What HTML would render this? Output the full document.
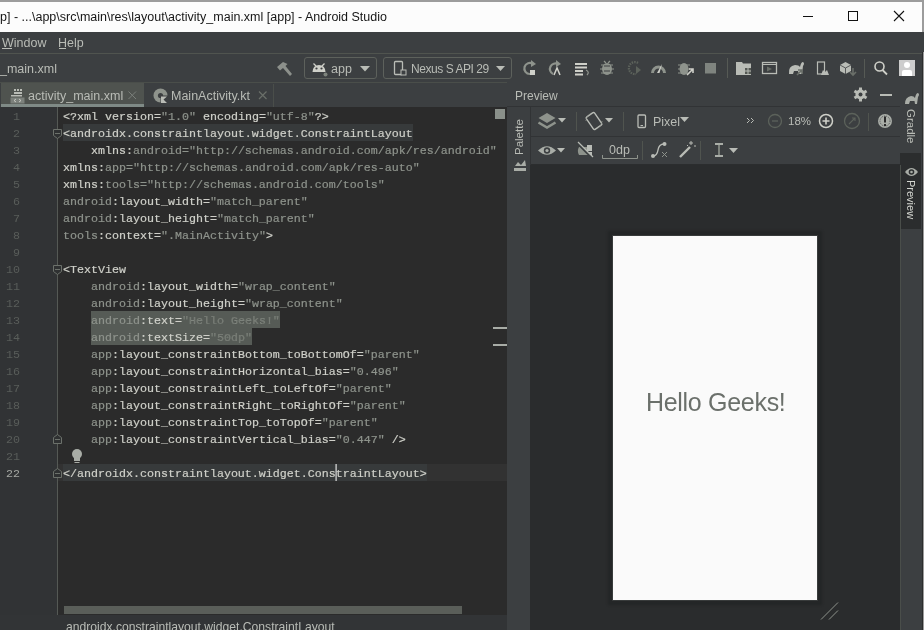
<!DOCTYPE html>
<html><head><meta charset="utf-8">
<style>
*{margin:0;padding:0;box-sizing:border-box}
html,body{width:924px;height:630px;overflow:hidden;background:#3c3f41;font-family:"Liberation Sans",sans-serif}
body{filter:grayscale(0.001)}
.a{position:absolute}
svg{position:absolute;overflow:visible}
#title{left:0;top:0;width:924px;height:32px;background:#fcfcfc;border-top:2px solid #9c9c9c;border-right:2px solid #9c9c9c}
#title .t{left:0;top:8px;font-size:12.5px;color:#161616;white-space:nowrap}
#menu{left:0;top:32px;width:924px;height:21px;background:#3c3f41}
#menu span{position:absolute;top:4px;font-size:12.5px;color:#b9bcb6}
#tb{left:0;top:53px;width:924px;height:29px;background:#3c3f41;border-top:1px solid #50544f}
.tt{position:absolute;font-size:12.5px;color:#b9bcb6;white-space:nowrap}
.box{position:absolute;border:1px solid #5d615c;border-radius:3px}
#tabs{left:0;top:82px;width:507px;height:25px;background:#3c3f41;border-top:1px solid #4a4e4a}
#editor{left:0;top:107px;width:507px;height:508px;background:#2b2b2b}
#gutter{left:0;top:107px;width:58px;height:508px;background:#313335;border-right:1px solid #555955}
.code{position:absolute;left:63px;top:109px;font-family:"Liberation Mono",monospace;font-size:11.67px;line-height:17px;white-space:pre}
.code .w{color:#cfd0c9;-webkit-text-stroke:0.2px #cfd0c9}
.code .d{color:#8e938c;-webkit-text-stroke:0.2px #8e938c}
.ln{position:absolute;left:0;top:109px;width:20px;text-align:right;font-family:"Liberation Mono",monospace;font-size:11.67px;line-height:17px;color:#595d5a;white-space:pre}
.hl{position:absolute;background:#373a3b}
#crumb{left:0;top:615px;width:507px;height:15px;background:#323436}
#prev{left:507px;top:82px;width:393px;height:548px;background:#3c3f41}
#surface{left:530px;top:165px;width:370px;height:465px;background:#2a2c2d}
#phone{left:613px;top:236px;width:204px;height:364px;background:#fafafa;box-shadow:0 0 0 1px #383b3b,0 0 2px 5px #242627}
#stripx{left:900px;top:82px;width:24px;height:548px;background:#3c3f41;border-left:1px solid #333537}
</style></head><body>
<div id="title" class="a"><div class="t a">p] - ...\app\src\main\res\layout\activity_main.xml [app] - Android Studio</div>
<svg width="924" height="32" style="left:0;top:-2px">
<line x1="803" y1="16.5" x2="813" y2="16.5" stroke="#111" stroke-width="1"/>
<rect x="848.5" y="11.5" width="9" height="9" fill="none" stroke="#111" stroke-width="1"/>
<path d="M894 11 L904 21 M904 11 L894 21" stroke="#111" stroke-width="1.1"/>
</svg></div>
<div id="menu" class="a"><span style="left:2px">Window</span><span style="left:58px">Help</span><div class="a" style="left:2px;top:16px;width:10px;height:1px;background:#b9bcb6"></div><div class="a" style="left:59px;top:16px;width:7px;height:1px;background:#b9bcb6"></div></div>
<div id="tb" class="a">
<div class="tt" style="left:0;top:8px">_main.xml</div>
<svg width="924" height="29" style="left:0;top:0">
<g fill="#8c908b">
<path d="M277 13 L283 8 L287.5 10 L285.5 12 L292 20 L290 22 L283 14 L280 16.5 Z"/>
</g>
<g fill="#cfd0c9">
<path d="M312.5 18 Q313 11 319 11 Q325 11 325.5 18 Z"/>
<path d="M313.5 9.5 L316 12 M324.5 9.5 L322 12" stroke="#cfd0c9" stroke-width="1.3"/>
</g>
<circle cx="316.5" cy="14.5" r="1.1" fill="#3c3f41"/><circle cx="321.5" cy="14.5" r="1.1" fill="#3c3f41"/>
<circle cx="325.5" cy="20.5" r="2" fill="#7d837c"/>
<path d="M360 12 L370 12 L365 17.5 Z" fill="#b9bcb6"/>
<rect x="394.5" y="7.5" width="8" height="13" rx="1" fill="none" stroke="#b9bcb6" stroke-width="1.3"/>
<rect x="401" y="16" width="5" height="5" fill="#3c3f41" stroke="#b9bcb6" stroke-width="1"/>
<path d="M496 12 L505 12 L500.5 17 Z" fill="#b9bcb6"/>
<!-- rerun -->
<path d="M533 10 A5.5 5.5 0 1 0 530 20" fill="none" stroke="#8e938c" stroke-width="2.2"/>
<path d="M531 6 L536 10 L531 13 Z" fill="#8e938c"/>
<rect x="530" y="16" width="5" height="5" fill="#cfd0c9"/>
<!-- apply code changes -->
<path d="M558 10 A5.5 5.5 0 1 0 553 20" fill="none" stroke="#8e938c" stroke-width="2.2"/>
<path d="M556 6 L561 10 L556 13 Z" fill="#8e938c"/>
<path d="M554 21 L557 14 L560 21" fill="none" stroke="#cfd0c9" stroke-width="1.5"/>
<!-- apply changes lines -->
<g fill="#cfd0c9"><rect x="575" y="9" width="12" height="2"/><rect x="575" y="12.5" width="12" height="2"/><rect x="575" y="16" width="8" height="2"/><rect x="575" y="19.5" width="8" height="2"/></g>
<path d="M586 16 Q590 18 587 21" fill="none" stroke="#8e938c" stroke-width="1.2"/>
<!-- bug -->
<g fill="#8e938c"><ellipse cx="607" cy="15" rx="5" ry="6"/></g>
<path d="M601 11 L613 11 M600 15 L614 15 M601 19 L613 19 M604 7 L606 9 M610 7 L608 9" stroke="#8e938c" stroke-width="1.2"/>
<path d="M604 12 L610 12 M604 17 L610 17" stroke="#3c3f41" stroke-width="1"/>
<!-- attach (dim) -->
<path d="M638 9 A6 6 0 1 0 636 20" fill="none" stroke="#5c625b" stroke-width="2.2" stroke-dasharray="1.5 1"/>
<path d="M636 12 L641 16 L636 20 Z" fill="#5c625b"/>
<!-- gauge -->
<path d="M651 19 A7.5 7.5 0 0 1 666 19 L663 19 A4.5 4.5 0 0 0 654 19 Z" fill="#8e938c"/>
<path d="M657 19 L662 10 L659.5 19 Z" fill="#cfd0c9"/>
<!-- attach debugger -->
<g fill="#8e938c"><ellipse cx="684" cy="15" rx="4.5" ry="6"/></g>
<path d="M678 11 L690 11 M678 15 L690 15 M678 19 L688 19" stroke="#8e938c" stroke-width="1.2"/>
<path d="M687 21 L693 15 M689 15 L693 15 L693 19" stroke="#cfd0c9" stroke-width="1.6" fill="none"/>
<!-- stop -->
<rect x="705" y="9" width="11" height="10.5" fill="#7f847f"/>
<line x1="727.5" y1="4" x2="727.5" y2="24" stroke="#565a55"/>
<!-- project structure -->
<path d="M736 8 L742 8 L743 9.5 L751 9.5 L751 21 L736 21 Z" fill="#b9bcb6"/>
<g fill="#545853"><rect x="745" y="14" width="2.5" height="2.5"/><rect x="748.5" y="14" width="2.5" height="2.5"/><rect x="745" y="17.5" width="2.5" height="2.5"/><rect x="748.5" y="17.5" width="2.5" height="2.5"/></g>
<!-- avd -->
<rect x="762.5" y="8.5" width="14" height="11" fill="none" stroke="#b9bcb6" stroke-width="1.3"/>
<line x1="762.5" y1="10.5" x2="776.5" y2="10.5" stroke="#b9bcb6"/>
<path d="M767 12.5 L772 15 L767 17.5 Z" fill="#6a6f69"/>
<!-- gradle elephant -->
<path d="M789 20 Q788 12 795 11 Q799 11 800 13 Q801 8 803 8 Q805 9 803 12 L802 20 L799 20 L798 17 L794 17 L793 20 Z" fill="#b9bcb6"/>
<path d="M797 21 L802 16 M798 16 L802 16 L802 20" stroke="#6a6f69" stroke-width="1.6" fill="none"/>
<!-- device manager -->
<rect x="817.5" y="8" width="7" height="12" fill="none" stroke="#b9bcb6" stroke-width="1.2"/>
<path d="M821 21 L829 21 L827 16 L825 18 L823 16 Z" fill="#b9bcb6"/>
<!-- sdk cube -->
<path d="M840 11 L845.5 8 L851 11 L851 17 L845.5 20 L840 17 Z" fill="#b9bcb6"/>
<path d="M840 11 L845.5 14 L851 11 M845.5 14 L845.5 20" stroke="#3c3f41" stroke-width="0.8" fill="none"/>
<path d="M853 14 L853 20 M850 18 L853 21 L856 18" stroke="#6a6f69" stroke-width="1.6" fill="none"/>
<line x1="864.5" y1="5" x2="864.5" y2="24" stroke="#565a55"/>
<!-- search -->
<circle cx="879.5" cy="12.5" r="4.5" fill="none" stroke="#cfd0c9" stroke-width="1.6"/>
<line x1="882.5" y1="16" x2="887" y2="20.5" stroke="#cfd0c9" stroke-width="1.8"/>
<!-- avatar -->
<rect x="899" y="6" width="16" height="16" fill="#cdcdcd"/>
<circle cx="907" cy="11" r="3" fill="#fff"/>
<path d="M902 22 L902 18 Q902 16 904 16 L910 16 Q912 16 912 18 L912 22 Z" fill="#fff"/>
</svg>
<div class="box" style="left:304px;top:3px;width:73px;height:22px"></div>
<div class="tt" style="left:331px;top:8px">app</div>
<div class="box" style="left:383px;top:3px;width:129px;height:22px"></div>
<div class="tt" style="left:411px;top:8px;font-size:12px;letter-spacing:-0.45px">Nexus S API 29</div>
</div>
<div id="tabs" class="a">
<div class="a" style="left:1px;top:0;width:143px;height:24px;background:#4f534f;border-bottom:3px solid #7f8a86"></div>
<div class="tt" style="left:28px;top:6px">activity_main.xml</div>
<div class="tt" style="left:171px;top:6px">MainActivity.kt</div>
<svg width="507" height="25" style="left:0;top:0">
<g fill="#b9bcb6"><rect x="14" y="6" width="2" height="2"/><rect x="17" y="6" width="2" height="2"/><rect x="20" y="6" width="2" height="2"/><rect x="14" y="9" width="8" height="2"/><rect x="11" y="12" width="11" height="1.5"/></g>
<rect x="10.5" y="14.5" width="14" height="6" fill="#7c817c"/>
<path d="M14 17.5 L16 16 M14 17.5 L16 19 M21 17.5 L19 16 M21 17.5 L19 19" stroke="#cfd0c9" stroke-width="0.9"/>
<path d="M128.5 8.5 L136 16 M136 8.5 L128.5 16" stroke="#7a7f7a" stroke-width="1"/>
<circle cx="160.5" cy="12.5" r="7" fill="#8e938c"/>
<circle cx="160.5" cy="12.5" r="2.6" fill="#3c3f41"/>
<path d="M160.5 12.5 L168 12.5 L168 20 L160.5 20 Z" fill="#3c3f41"/>
<path d="M161 13.5 L167 13.5 L163.5 16.5 L167 20 L161 20 Z" fill="#b9bcb6"/>
<path d="M259 8.5 L266.5 16 M266.5 8.5 L259 16" stroke="#6a6f69" stroke-width="1.2"/>
<line x1="273.5" y1="1" x2="273.5" y2="24" stroke="#4a4e4a"/>
</svg>
</div>
<div id="editor" class="a"></div>
<div id="gutter" class="a"></div>
<div class="hl" style="left:63px;top:124px;width:350px;height:17px"></div>
<div class="hl" style="left:58px;top:464px;width:449px;height:17px;background:#323232"></div>
<div class="hl" style="left:63px;top:464px;width:364px;height:17px"></div>
<div class="hl" style="left:91px;top:311px;width:189px;height:17px;background:#565b56"></div>
<div class="hl" style="left:91px;top:328px;width:161px;height:17px;background:#565b56"></div>
<div class="ln">1
2
3
4
5
6
7
8
9
10
11
12
13
14
15
16
17
18
19
20
21
<span style="color:#a4a7a2">22</span></div>
<div class="code"><span class="w">&lt;?xml version=</span><span class="d">&quot;1.0&quot;</span><span class="w"> encoding=</span><span class="d">&quot;utf-8&quot;</span><span class="w">?&gt;</span>
<span class="w">&lt;androidx.constraintlayout.widget.ConstraintLayout</span>
<span class="w">    xmlns:</span><span class="d">android=&quot;http://schemas.android.com/apk/res/android&quot;</span>
<span class="w">xmlns:</span><span class="d">app=&quot;http://schemas.android.com/apk/res-auto&quot;</span>
<span class="w">xmlns:</span><span class="d">tools=&quot;http://schemas.android.com/tools&quot;</span>
<span class="d">android</span><span class="w">:layout_width=</span><span class="d">&quot;match_parent&quot;</span>
<span class="d">android</span><span class="w">:layout_height=</span><span class="d">&quot;match_parent&quot;</span>
<span class="d">tools</span><span class="w">:context=</span><span class="d">&quot;.MainActivity&quot;</span><span class="w">&gt;</span>

<span class="w">&lt;TextView</span>
<span class="w">    </span><span class="d">android</span><span class="w">:layout_width=</span><span class="d">&quot;wrap_content&quot;</span>
<span class="w">    </span><span class="d">android</span><span class="w">:layout_height=</span><span class="d">&quot;wrap_content&quot;</span>
<span class="w">    </span><span class="d">android</span><span class="w">:text=</span><span class="d" style="color:#727770">&quot;Hello Geeks!&quot;</span>
<span class="w">    </span><span class="d">android</span><span class="w">:textSize=</span><span class="d" style="color:#727770">&quot;50dp&quot;</span>
<span class="w">    </span><span class="d">app</span><span class="w">:layout_constraintBottom_toBottomOf=</span><span class="d">&quot;parent&quot;</span>
<span class="w">    </span><span class="d">app</span><span class="w">:layout_constraintHorizontal_bias=</span><span class="d">&quot;0.496&quot;</span>
<span class="w">    </span><span class="d">app</span><span class="w">:layout_constraintLeft_toLeftOf=</span><span class="d">&quot;parent&quot;</span>
<span class="w">    </span><span class="d">app</span><span class="w">:layout_constraintRight_toRightOf=</span><span class="d">&quot;parent&quot;</span>
<span class="w">    </span><span class="d">app</span><span class="w">:layout_constraintTop_toTopOf=</span><span class="d">&quot;parent&quot;</span>
<span class="w">    </span><span class="d">app</span><span class="w">:layout_constraintVertical_bias=</span><span class="d">&quot;0.447&quot;</span><span class="w"> /&gt;</span>

<span class="w">&lt;/androidx.constraintlayout.widget.ConstraintLayout&gt;</span></div>

<svg width="507" height="520" style="left:0;top:107px">
<g fill="#2f3132" stroke="#6c716b" stroke-width="1">
<path d="M53.5 22.5 L61.5 22.5 L61.5 28.5 L57.5 31.5 L53.5 28.5 Z"/>
<path d="M53.5 158.5 L61.5 158.5 L61.5 164.5 L57.5 167.5 L53.5 164.5 Z"/>
<path d="M53.5 336.5 L61.5 336.5 L61.5 330.5 L57.5 327.5 L53.5 330.5 Z"/>
<path d="M53.5 370.5 L61.5 370.5 L61.5 364.5 L57.5 361.5 L53.5 364.5 Z"/>
</g>
<g stroke="#6c716b" stroke-width="1">
<line x1="55" y1="26.5" x2="60" y2="26.5"/><line x1="55" y1="162.5" x2="60" y2="162.5"/>
<line x1="55" y1="332.5" x2="60" y2="332.5"/><line x1="55" y1="366.5" x2="60" y2="366.5"/>
</g>
<circle cx="77" cy="347" r="5" fill="#a9ada7"/>
<rect x="74" y="351" width="6" height="2" fill="#a9ada7"/>
<g stroke="#a9ada7" stroke-width="1"><line x1="74" y1="353.5" x2="80" y2="353.5"/><line x1="74.5" y1="355.5" x2="79.5" y2="355.5"/></g>
<rect x="495" y="2" width="10" height="10" fill="#8a908a"/>
<rect x="493" y="220" width="14" height="2" fill="#a8aca6"/>
<rect x="493" y="237" width="14" height="2" fill="#a8aca6"/>
<rect x="335.5" y="357" width="1.2" height="17" fill="#e0e0e0"/>
</svg>
<div class="a" style="left:64px;top:606px;width:398px;height:8px;background:#5a5e59"></div>
<div id="crumb" class="a"><div class="tt" style="left:66px;top:5px;font-size:12.15px">androidx.constraintlayout.widget.ConstraintLayout</div></div>
<div id="prev" class="a">
<div class="tt" style="left:8px;top:7px;font-size:12px">Preview</div>
</div>
<svg width="417" height="548" style="left:507px;top:82px">
<line x1="0" y1="24.5" x2="393" y2="24.5" stroke="#313335"/>
<line x1="23.5" y1="25" x2="23.5" y2="83" stroke="#313335"/>
<line x1="24" y1="54.5" x2="393" y2="54.5" stroke="#313335"/>
<line x1="24" y1="82.5" x2="393" y2="82.5" stroke="#2b2d2e"/>
<!-- gear -->
<g transform="translate(353.5,12.5)" fill="#b9bcb6">
<circle r="5"/>
<g><rect x="-1.5" y="-7" width="3" height="14"/><rect x="-1.5" y="-7" width="3" height="14" transform="rotate(60)"/><rect x="-1.5" y="-7" width="3" height="14" transform="rotate(120)"/></g>
<circle r="2" fill="#3c3f41"/>
</g>
<rect x="373" y="12" width="12" height="2" fill="#b9bcb6"/>
<!-- row1 -->
<path d="M31.5 36 L40 31 L48.5 36 L40 41 Z" fill="#8e938c"/>
<path d="M31.5 40.5 L40 45.5 L48.5 40.5" fill="none" stroke="#8e938c" stroke-width="2.6"/>
<path d="M51 36 L59 36 L55 40.5 Z" fill="#b9bcb6"/>
<line x1="69.5" y1="30" x2="69.5" y2="49" stroke="#50544f"/>
<g transform="translate(87,39) rotate(-35)"><rect x="-5" y="-7.5" width="10" height="15" rx="1.5" fill="none" stroke="#b9bcb6" stroke-width="1.4"/></g>
<path d="M79 39 A8.5 8.5 0 0 1 84 31.5 M95 39 A8.5 8.5 0 0 1 90 46.5" fill="none" stroke="#8e938c" stroke-width="0.9" stroke-dasharray="1.2 1"/>
<path d="M98 36 L106 36 L102 40.5 Z" fill="#b9bcb6"/>
<line x1="116.5" y1="30" x2="116.5" y2="49" stroke="#50544f"/>
<rect x="131" y="33" width="7.5" height="12.5" rx="1" fill="none" stroke="#b9bcb6" stroke-width="1.3"/>
<line x1="133.5" y1="43.5" x2="136" y2="43.5" stroke="#b9bcb6"/>
<path d="M173 35 L182 35 L177.5 40 Z" fill="#b9bcb6"/>
<path d="M240 36 L242.5 38.5 L240 41 M244 36 L246.5 38.5 L244 41" fill="none" stroke="#b9bcb6" stroke-width="1"/>
<circle cx="268" cy="39" r="6.5" fill="none" stroke="#5c625b" stroke-width="1.3"/>
<line x1="265" y1="39" x2="271" y2="39" stroke="#5c625b" stroke-width="1.3"/>
<circle cx="319" cy="39" r="6.5" fill="none" stroke="#cfd0c9" stroke-width="1.5"/>
<path d="M315.5 39 L322.5 39 M319 35.5 L319 42.5" stroke="#cfd0c9" stroke-width="1.6"/>
<circle cx="345" cy="39" r="7.5" fill="none" stroke="#5c625b" stroke-width="1.3"/>
<path d="M342 42 L348 36 M345 36 L348 36 L348 39" fill="none" stroke="#5c625b" stroke-width="1.1"/>
<line x1="361.5" y1="31" x2="361.5" y2="49" stroke="#50544f"/>
<circle cx="378" cy="39" r="7" fill="#a9ada7"/>
<circle cx="378" cy="39" r="5" fill="none" stroke="#3c3f41" stroke-width="0.8" stroke-dasharray="1 1"/>
<rect x="377" y="34.5" width="2" height="6" fill="#2b2b2b"/><rect x="377" y="42" width="2" height="2" fill="#2b2b2b"/>
<!-- row2 -->
<path d="M31 68.5 Q40 60 49 68.5 Q40 77 31 68.5 Z" fill="#a9ada7"/>
<circle cx="40" cy="68.5" r="3.2" fill="#3c3f41"/><circle cx="40" cy="68.5" r="1.6" fill="#a9ada7"/>
<path d="M50 66 L58 66 L54 70.5 Z" fill="#b9bcb6"/>
<path d="M72 73 A8 8 0 0 1 72 65 L81 65 L81 73 Z" fill="#8e938c"/>
<rect x="80" y="63" width="5" height="6" fill="#b9bcb6"/><rect x="80" y="70" width="5" height="3" fill="#b9bcb6"/>
<line x1="70" y1="61" x2="86" y2="77" stroke="#3c3f41" stroke-width="2"/>
<line x1="71" y1="60" x2="86" y2="75" stroke="#b9bcb6" stroke-width="1.2"/>
<path d="M95.5 73 L95.5 76.5 L130.5 76.5 L130.5 73" fill="none" stroke="#8e938c" stroke-width="1"/>
<line x1="135.5" y1="59" x2="135.5" y2="78" stroke="#50544f"/>
<path d="M146 74 Q150 74 151 68 Q152 62 157 62" fill="none" stroke="#b9bcb6" stroke-width="1.4"/>
<circle cx="146" cy="74" r="2" fill="#b9bcb6"/><circle cx="157.5" cy="62" r="2" fill="#b9bcb6"/>
<path d="M155 70 L160 75 M160 70 L155 75" stroke="#8e938c" stroke-width="1"/>
<line x1="173" y1="75" x2="183" y2="65" stroke="#b9bcb6" stroke-width="2.4"/>
<path d="M184 59 L184 63 M182 61 L186 61 M187 64 L189 64 M180 63 L181 64" stroke="#b9bcb6" stroke-width="1"/>
<line x1="193.5" y1="59" x2="193.5" y2="78" stroke="#50544f"/>
<g fill="#a9ada7"><rect x="208" y="61" width="8" height="2"/><rect x="211.2" y="63" width="1.6" height="10" fill="#8e938c"/><rect x="208" y="73" width="8" height="2"/></g>
<path d="M222 66 L231 66 L226.5 71 Z" fill="#b9bcb6"/>
<!-- palette strip icon -->
<g fill="#a9ada7"><path d="M8 84 L11 80 L14 83 L18 78 L19 84 Z"/><rect x="7" y="86" width="12" height="3"/></g>
</svg>
<div class="tt" style="left:653px;top:115px;font-size:12.5px">Pixel</div>
<div class="tt" style="left:788px;top:115px;font-size:11.5px">18%</div>
<div class="tt" style="left:609px;top:143px;font-size:12.5px">0dp</div>
<div class="tt" style="font-size:11.5px;transform:rotate(-90deg);transform-origin:0 0;top:155px;left:513px">Palette</div>
<svg width="24" height="548" style="left:900px;top:82px">
<rect x="0" y="71" width="21" height="76" fill="#2b2d2e"/>
<path d="M5 22 Q5 15 11 14 Q14 14 15 16 Q16 11 18 11 Q20 12 18 15 L17 22 L15 22 L14.5 19 L10 19 L9 22 Z" fill="#a9ada7"/>
<path d="M5 90 Q11.5 82 18 90 Q11.5 98 5 90 Z" fill="#a9ada7"/>
<circle cx="11.5" cy="90" r="2.8" fill="#2b2d2e"/><circle cx="11.5" cy="90" r="1.3" fill="#a9ada7"/>
<line x1="22.5" y1="-30" x2="22.5" y2="548" stroke="#2b2d2e" stroke-width="1"/><line x1="23.5" y1="-30" x2="23.5" y2="548" stroke="#9c9c9c" stroke-width="1"/><line x1="0.5" y1="83" x2="0.5" y2="548" stroke="#4a4e4a" stroke-width="1"/>
</svg>
<div class="tt" style="left:917px;top:109px;font-size:11.5px;transform:rotate(90deg);transform-origin:0 0">Gradle</div>
<div class="tt" style="left:917px;top:180px;font-size:11px;transform:rotate(90deg);transform-origin:0 0;color:#d4d6d0">Preview</div>

<div id="surface" class="a"></div>
<svg width="60" height="40" style="left:810px;top:595px"><path d="M11 24.5 L28 7.5 M19 24.5 L28 15.5" stroke="#8e938c" stroke-width="1"/></svg>
<div id="phone" class="a"><div class="a" style="left:33px;top:152px;font-size:25px;letter-spacing:-0.3px;color:#6b706b;white-space:nowrap">Hello Geeks!</div></div>

</body></html>
